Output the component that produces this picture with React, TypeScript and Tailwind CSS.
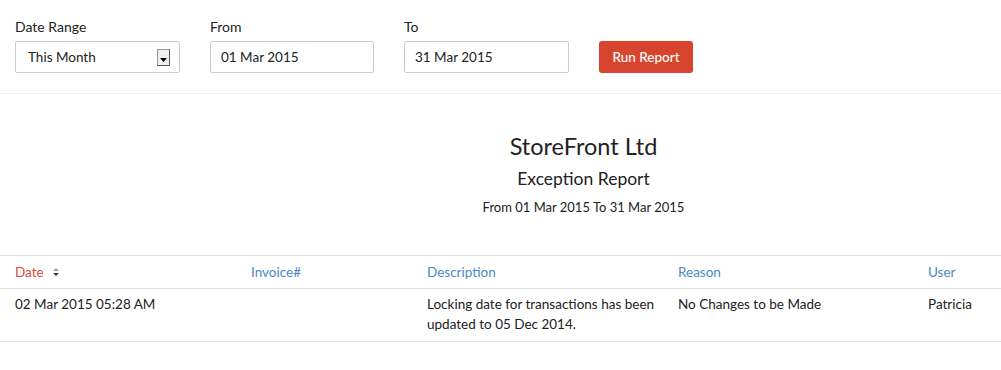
const rows = [
  {
    date: '02 Mar 2015 05:28 AM',
    invoice: '',
    description: 'Locking date for transactions has been updated to 05 Dec 2014.',
    reason: 'No Changes to be Made',
    user: 'Patricia',
  },
]

function SortIcon() {
  return (
    <svg width="8" height="10" viewBox="0 0 8 10" className="ml-[8px] inline-block">
      <path d="M1 4 L4 1 L7 4 Z" fill="#9aa0a6" />
      <path d="M1 6 L4 9 L7 6 Z" fill="#333" />
    </svg>
  )
}

export default function App() {
  return (
    <div className="w-[1001px] h-[370px] bg-white text-[#222] text-[13.5px] overflow-hidden" style={{ fontFamily: 'Lato, "Open Sans", sans-serif' }}>
      {/* filtros */}
      <div className="flex items-end px-[15px] pt-[18px] pb-[20px] border-b border-[#eee]">
        <div className="w-[195px]">
          <div className="text-[14px] mb-[5px] leading-[18px]">Date Range</div>
          <div className="w-[165px] h-[32px] border border-[#ccc] rounded-[2px] flex items-center justify-between pl-[12px] pr-[9px]">
            <span>This Month</span>
            <span className="w-[13px] h-[17px] bg-[#f0f0f0] border border-[#999] border-r-[#555] border-b-[#555] flex items-end justify-center pb-[3px]">
              <svg width="7" height="4" viewBox="0 0 7 4"><path d="M0 0 L7 0 L3.5 4 Z" fill="#000" /></svg>
            </span>
          </div>
        </div>
        <div className="w-[194px]">
          <div className="text-[14px] mb-[5px] leading-[18px]">From</div>
          <div className="w-[164px] h-[32px] border border-[#ccc] rounded-[2px] flex items-center px-[10px]">01 Mar 2015</div>
        </div>
        <div className="w-[195px]">
          <div className="text-[14px] mb-[5px] leading-[18px]">To</div>
          <div className="w-[165px] h-[32px] border border-[#ccc] rounded-[2px] flex items-center px-[10px]">31 Mar 2015</div>
        </div>
        <button className="h-[32px] w-[94px] bg-[#d8452e] text-white rounded-[3px] text-[13.5px] font-medium">Run Report</button>
      </div>

      {/* cabeçalho do relatório */}
      <div className="pl-[166px] pt-[37px] pb-[39px] text-center">
        <div className="text-[23.5px] leading-[30px] text-[#222]">StoreFront Ltd</div>
        <div className="text-[17.5px] leading-[24px] mt-[6px]">Exception Report</div>
        <div className="text-[13px] leading-[18px] mt-[7px]">From 01 Mar 2015 To 31 Mar 2015</div>
      </div>

      {/* tabela */}
      <div className="border-t border-[#ddd]">
        <div className="grid grid-cols-[236px_176px_251px_250px_1fr] border-b border-[#ddd] h-[33px] items-center text-[#4a89c4]">
          <div className="pl-[15px] text-[#e04b3a] flex items-center">Date<SortIcon /></div>
          <div className="pl-[15px]">Invoice#</div>
          <div className="pl-[15px]">Description</div>
          <div className="pl-[15px]">Reason</div>
          <div className="pl-[15px]">User</div>
        </div>
        {rows.map((r, i) => (
          <div key={i} className="grid grid-cols-[236px_176px_251px_250px_1fr] border-b border-[#e5e5e5] pt-[5px] pb-[7px] leading-[20px]">
            <div className="pl-[15px]">{r.date}</div>
            <div className="pl-[15px]">{r.invoice}</div>
            <div className="pl-[15px] pr-[8px]">{r.description}</div>
            <div className="pl-[15px]">{r.reason}</div>
            <div className="pl-[15px]">{r.user}</div>
          </div>
        ))}
      </div>
    </div>
  )
}
